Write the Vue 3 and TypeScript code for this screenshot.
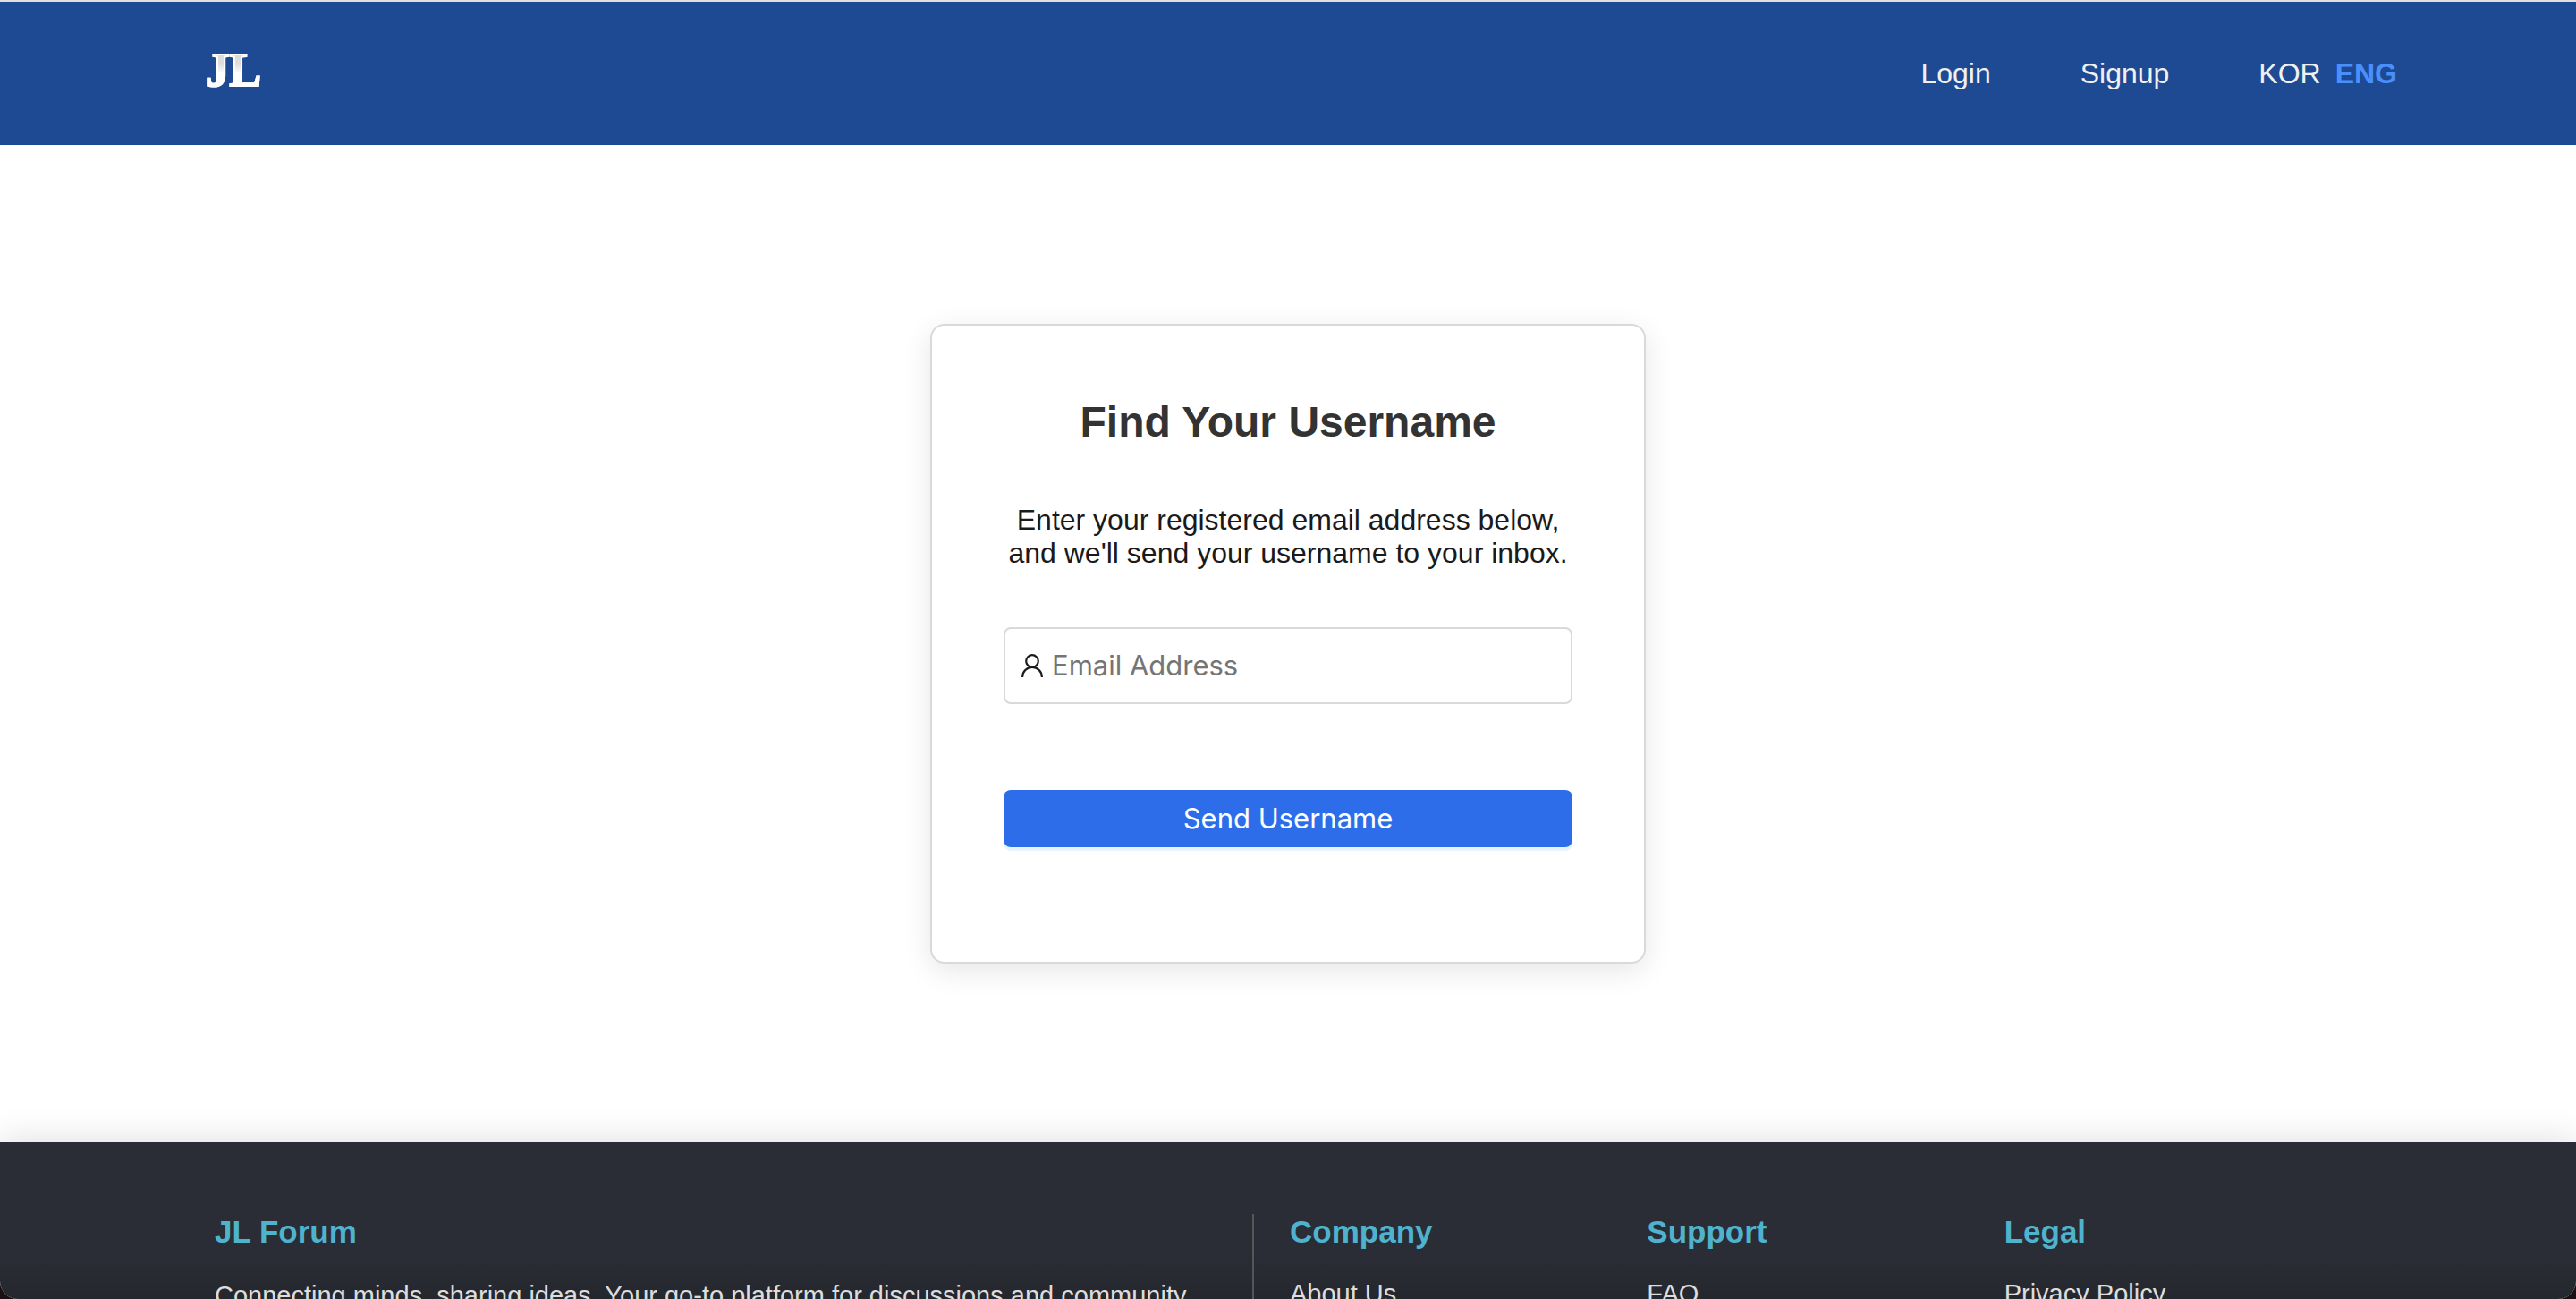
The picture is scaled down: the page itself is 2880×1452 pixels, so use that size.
<script setup lang="ts">
import { ref } from 'vue'

interface LinkGroup {
  title: string
  links: string[]
}

const email = ref('')
const language = ref<'KOR' | 'ENG'>('ENG')
const languages = ['KOR', 'ENG'] as const

const groups: LinkGroup[] = [
  { title: 'Company', links: ['About Us'] },
  { title: 'Support', links: ['FAQ'] },
  { title: 'Legal', links: ['Privacy Policy'] },
]
</script>

<template>
  <div class="page">
    <header class="header">
      <a class="logo" href="#">JL</a>
      <nav class="nav">
        <a href="#">Login</a>
        <a href="#">Signup</a>
        <div class="languages">
          <button
            v-for="code in languages"
            :key="code"
            type="button"
            :class="{ active: language === code }"
            @click="language = code"
          >{{ code }}</button>
        </div>
      </nav>
    </header>

    <main class="main">
      <form class="card" @submit.prevent>
        <h1>Find Your Username</h1>
        <p>Enter your registered email address below,<br />and we'll send your username to your inbox.</p>
        <label class="field">
          <svg viewBox="0 0 24 26" width="24" height="26" fill="none" stroke="currentColor" stroke-width="2.2" aria-hidden="true">
            <circle cx="12" cy="8" r="6.8" />
            <path d="M1.1 26C1.1 19.5 6 14.9 12 14.9S22.9 19.5 22.9 26" />
          </svg>
          <input v-model="email" type="email" placeholder="Email Address" aria-label="Email Address" />
        </label>
        <button class="submit" type="submit">Send Username</button>
      </form>
    </main>

    <footer class="footer">
      <section class="about">
        <h2>JL Forum</h2>
        <p>Connecting minds, sharing ideas. Your go-to platform for discussions and community</p>
      </section>
      <div class="groups">
        <section v-for="group in groups" :key="group.title">
          <h2>{{ group.title }}</h2>
          <ul>
            <li v-for="link in group.links" :key="link"><a href="#">{{ link }}</a></li>
          </ul>
        </section>
      </div>
    </footer>
  </div>
</template>

<style>
body {
  background: #1a0f12;
}
</style>

<style scoped>
.page {
  display: flex;
  flex-direction: column;
  height: 100vh;
  overflow: hidden;
  box-sizing: border-box;
  border-top: 2px solid #e0e0e0;
  border-radius: 0 0 20px 20px;
  background: #fff;
  color: #1a1a1a;
  font: 32px/37px "Liberation Sans", Arial, sans-serif;
}

.header {
  display: flex;
  flex: none;
  align-items: center;
  justify-content: space-between;
  height: 160px;
  padding: 0 200px 0 230px;
  background: #1e4a93;
}

a {
  color: inherit;
  text-decoration: none;
}

.logo {
  padding-bottom: 8px;
  background: linear-gradient(#ddd 35%, #fff 50%);
  background-clip: text;
  color: transparent;
  font: bold 53px/64px "Liberation Serif", serif;
  -webkit-text-stroke: 2px #fff;
}

.nav {
  display: flex;
  gap: 100px;
  color: #f0f0f0;
}

.languages {
  display: flex;
  gap: 16px;
}

.languages button {
  padding: 0;
  border: 0;
  background: none;
  color: inherit;
  font: inherit;
}

.languages .active {
  color: #4a90fc;
  font-weight: bold;
}

.main {
  flex: none;
  padding: 200px 0;
}

.card {
  display: flex;
  flex-direction: column;
  box-sizing: border-box;
  width: 800px;
  margin: 0 auto;
  padding: 80px 80px 128px;
  border: 2px solid #d9d9d9;
  border-radius: 16px;
  background: #fff;
  box-shadow: 0 8px 32px rgba(0, 0, 0, 0.1);
  text-align: center;
}

h1 {
  margin: 0 0 64px;
  color: #333;
  font-size: 48px;
  line-height: 55px;
}

p {
  margin: 0;
}

.field {
  display: flex;
  align-items: center;
  gap: 10px;
  box-sizing: border-box;
  height: 86px;
  margin: 64px 0 96px;
  padding: 0 18px;
  border: 2px solid #d9d9d9;
  border-radius: 8px;
}

.field svg {
  flex: none;
}

.field input {
  flex: 1;
  min-width: 0;
  padding: 0;
  border: 0;
  outline: 0;
  background: none;
  font: 31px/40px Inter, sans-serif;
}

.field input::placeholder {
  color: #757575;
}

.submit {
  height: 64px;
  border: 0;
  border-radius: 8px;
  background: #2d6dea;
  box-shadow: 0 4px 0 rgba(5, 145, 255, 0.1);
  color: #fff;
  font: 31px/40px Inter, sans-serif;
}

.footer {
  display: grid;
  flex: 1 0 auto;
  grid-template-columns: 97fr 100fr;
  gap: 40px;
  padding: 80px 240px 0;
  background: linear-gradient(#2a2d35, #2a2d35 130px, #25272e 175px);
  box-shadow: 0 -8px 32px rgba(0, 0, 0, 0.1);
  color: #ddd;
  font-size: 29px;
  line-height: 46px;
}

h2 {
  margin: 0 0 28px;
  color: #4fb3ce;
  font-size: 35px;
  line-height: 40px;
}

.about {
  border-right: 2px solid #555;
}

.groups {
  display: grid;
  grid-template-columns: repeat(3, 1fr);
}

ul {
  margin: 0;
  padding: 0;
  list-style: none;
  line-height: 42px;
}
</style>
